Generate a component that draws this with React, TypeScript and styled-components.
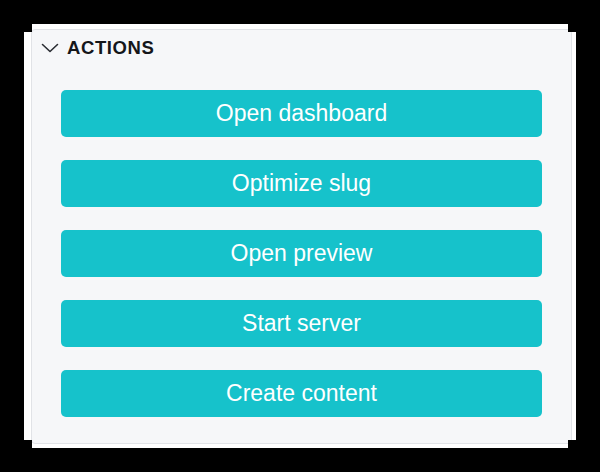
import React from "react";
import styled, { createGlobalStyle } from "styled-components";

const Global = createGlobalStyle`
  html, body { margin: 0; padding: 0; background: #000; }
  body { font-family: "Liberation Sans", Arial, sans-serif; }
`;

const Stage = styled.div`
  width: 600px;
  height: 472px;
  padding: 24px;
  box-sizing: border-box;
  background: #000;
`;

const Frame = styled.div`
  width: 552px;
  height: 424px;
  box-sizing: border-box;
  background: #ffffff;
  padding: 5px 4px 4px 7px;
  clip-path: polygon(8px 0, calc(100% - 8px) 0, calc(100% - 8px) 8px, 100% 8px, 100% calc(100% - 8px), calc(100% - 8px) calc(100% - 8px), calc(100% - 8px) 100%, 8px 100%, 8px calc(100% - 8px), 0 calc(100% - 8px), 0 8px, 8px 8px);
`;

const Panel = styled.section`
  height: 100%;
  box-sizing: border-box;
  background: #f6f7f9;
  border: 1px solid #e1e3e7;
  border-radius: 4px;
  display: flex;
  flex-direction: column;
`;

const Header = styled.div`
  height: 36px;
  display: flex;
  align-items: center;
  gap: 8px;
  padding: 0 9px;
`;

const Title = styled.h2`
  margin: 0;
  font-family: "Liberation Sans", Arial, sans-serif;
  font-size: 18.5px;
  font-weight: 700;
  letter-spacing: 0.6px;
  color: #14161a;
`;

const List = styled.div`
  margin-top: 24px;
  display: flex;
  flex-direction: column;
  align-items: center;
  gap: 23px;
`;

const ActionButton = styled.button`
  width: 481px;
  height: 47px;
  border: none;
  border-radius: 5px;
  background: #16c2cb;
  color: #ffffff;
  font-family: "Liberation Sans", Arial, sans-serif;
  font-size: 23px;
  cursor: pointer;
  padding: 0;
`;

const actions = [
  "Open dashboard",
  "Optimize slug",
  "Open preview",
  "Start server",
  "Create content",
];

export default function App() {
  return (
    <>
      <Global />
      <Stage>
        <Frame>
          <Panel>
            <Header>
              <svg width="18" height="18" viewBox="0 0 18 18" fill="none">
                <path d="M1.5 5.5 L9 12.5 L16.5 5.5" stroke="#2a2d33" strokeWidth="1.6" strokeLinecap="round" strokeLinejoin="round" />
              </svg>
              <Title>ACTIONS</Title>
            </Header>
            <List>
              {actions.map((a) => (
                <ActionButton key={a}>{a}</ActionButton>
              ))}
            </List>
          </Panel>
        </Frame>
      </Stage>
    </>
  );
}
